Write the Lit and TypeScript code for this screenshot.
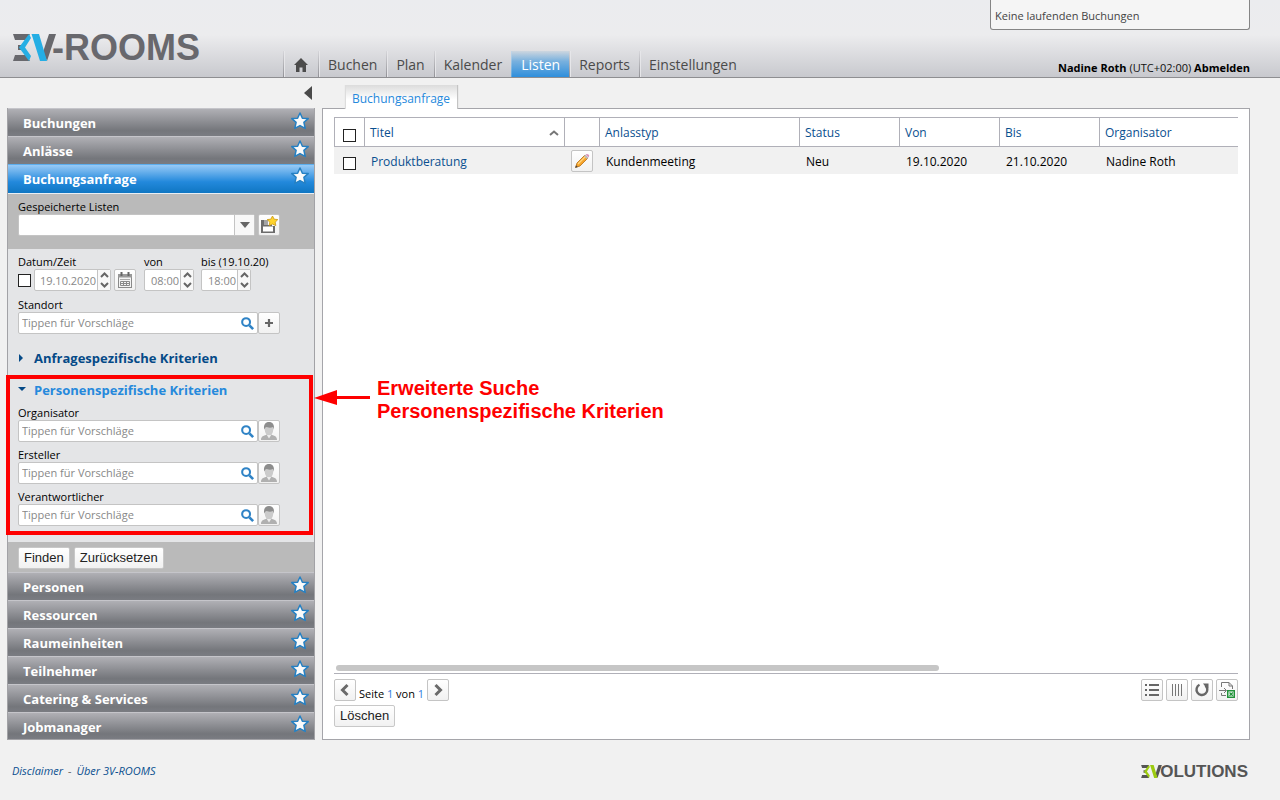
import { LitElement, html, css, svg } from "lit";
import { customElement } from "lit/decorators.js";

const icons: Record<string, unknown> = {
  home: svg`<path d="M8 1 15 8H13V15H9.500V10.500H6.500V15H3V8H1Z" fill="#4b4b4b"/>`,
  left: svg`<path d="M10.500 3 5.500 8 10.500 13" fill="none" stroke="#6a6a6a" stroke-width="3"/>`,
  right: svg`<path d="M5.500 3 10.500 8 5.500 13" fill="none" stroke="#6a6a6a" stroke-width="3"/>`,
  list: svg`<path d="M1 3h2M5 3h10M1 8h2M5 8h10M1 13h2M5 13h10" stroke="#666" stroke-width="2"/>`,
  columns: svg`<path d="M3.500 2v12M6.500 2v12M9.500 2v12M12.500 2v12" stroke="#777"/>`,
  reload: svg`<path d="M5.500 2.800A5.400 5.400 0 1 0 11.500 3.600" fill="none" stroke="#666" stroke-width="2.400"/><path d="M9 1.500H14.500V6.500L12 5.500Z" fill="#666"/>`,
  exportx: svg`<path d="M2.500 5V0.500H10L13.500 4V7M10 0.500V4H13.500M2.500 11V13.500H7M0 8.500H7M5 6l2.500 2.500L5 11" fill="none" stroke="#777"/><rect x="8.750" y="8.750" width="6.500" height="6.500" fill="#fff" stroke="#21923a" stroke-width="1.500"/><path d="M10.500 10.500l3.300 3.300M13.800 10.500l-3.300 3.300" stroke="#21923a" stroke-width="1.300"/>`,
  pencil: svg`<path d="M1.500 14.500 3 10 11 2 14 5 6 13Z" fill="#f7a42a" stroke="#b56d14" stroke-width=".8"/><path d="M4 11 11.500 3.500" stroke="#ffd781" stroke-width="1.300"/><path d="M10 3 11.300 1.800 14.300 4.700 13 6Z" fill="#b9bcc4"/><path d="M11.500 1.500Q13 .3 14.500 1.500T14.500 4.500Z" fill="#d893b8"/><path d="M1.300 14.700 2.100 12.300 3.800 14Z" fill="#444"/>`,
  plus: svg`<path d="M8 4v8M4 8h8" stroke="#666" stroke-width="2.200"/>`,
  person: svg`<path d="M0 17C0 13.500 2 13 5 12L6 11H10L11 12C14 13 16 13.500 16 17Z" fill="#b0b0b0"/><path d="M5.500 11.500 8 15.500 10.500 11.500Z" fill="#ececec"/><path d="M3.700 3.500H12.300V6.500Q12 12 8 12T3.700 6.500Z" fill="#cbcbcb"/><path d="M3.200 6.500C2.300 1.500 4.500-1 8-1S13.700 1.500 12.800 6.500L12 4Q9 5.200 6.500 4.200 4.500 3.500 3.200 6.500Z" fill="#8d8d8d"/>`,
  calendar: svg`<rect x="1.500" y="2.500" width="13" height="13" fill="#f4f4f4" stroke="#8a8a8a"/><path d="M1 2h14v3.500H1Z" fill="#999"/><path d="M4.500 0v4M11.500 0v4" stroke="#666" stroke-width="2"/><path d="M3 7.500h10" stroke="#aaa"/><path d="M3.500 9.500h9v4h-9ZM3.500 11.500h9M6.500 9.500v4M9.500 9.500v4" fill="none" stroke="#8a8a8a"/>`,
  save: svg`<path d="M0 3H4V8H11V9H14V16H0Z" fill="#6c6c6c"/><path d="M3 3h4v5H3Z" fill="#a4a4a4"/><path d="M2 9.500H12V14.500H2Z" fill="#fff"/><path d="M11.500-1 13.200 2.200 16.800 2.600 14.200 5.200 14.800 8.600 11.500 7 8.200 8.600 8.800 5.200 6.200 2.600 9.800 2.200Z" fill="#ffd42d" stroke="#c99710" stroke-width=".8"/>`,
  search: svg`<circle cx="6.500" cy="6.500" r="4.200" fill="#fff" stroke="#2f83c6" stroke-width="2.200"/><path d="M10 10 14 14" stroke="#2f83c6" stroke-width="2.800"/>`,
};

const icon = (name: string) =>
  html`<svg class="icon" viewBox="0 0 16 16" aria-hidden="true">${icons[name]}</svg>`;

const star = html`<svg class="star" viewBox="0 0 18 18" aria-hidden="true">
  <path d="M9 1 11.400 6.300 17.200 6.600 12.900 10.400 14.200 16.400 9 13.600 3.800 16.400 5.100 10.400 .8 6.600 6.600 6.300Z"
    fill="#fbfbfb" stroke="#2580c3" stroke-width="1.500" stroke-linejoin="round"/></svg>`;

const mark = (gray: string, accent: string) => html`<svg class="mark" viewBox="0 0 43 27" aria-hidden="true">
  <path d="M0 0H17L13 6H2ZM5 11H12V16H5ZM2 21H13L17 27H0Z" fill=${gray}/>
  <path d="M36 0H43L34 27L30 18Z" fill=${gray}/>
  <path d="M16 0 18 4 12 13.500 18 22 16 27 6 13.500ZM18.500 0H26L34 27H27Z" fill=${accent}/></svg>`;

const base = css`
  * { box-sizing: border-box; }
  button, input, select { font: inherit; margin: 0; }
  .icon { width: 16px; height: 16px; display: block; overflow: visible; }
  .square {
    width: 22px; height: 22px; padding: 0; flex: none;
    display: grid; place-items: center;
    border: 1px solid #c4c4c4; border-radius: 2px;
    background: linear-gradient(#fff, #f1f1f1);
  }
  .check {
    appearance: none; width: 13px; height: 13px; flex: none; display: block;
    border: 1px solid #222; background: #fff;
  }
  .action {
    height: 22px; padding: 0 5px;
    border: 1px solid #c8c8c8; border-radius: 2px;
    background: linear-gradient(#fff, #f1f1f1);
    font: 13px/20px "Liberation Sans", Arial, sans-serif; color: #222;
  }
`;

@customElement("rooms-header")
class RoomsHeader extends LitElement {
  static styles = [base, css`
    :host { display: block; }
    .header {
      height: 78px; padding: 0 30px 0 13px;
      display: flex; align-items: flex-end; gap: 83px;
      background: linear-gradient(#ebecef 0, #ececee 35px, #c8c9ce 77px);
      border-bottom: 1px solid #8e8e91;
    }
    .logo {
      display: flex; align-items: center; height: 60px;
      font: bold 36px/60px "Liberation Sans", Arial, sans-serif; color: #68686d;
    }
    .logo span { padding-top: 2px; }
    .mark { width: 43px; height: 27px; margin-right: -4px; }
    nav { display: flex; }
    .tab {
      height: 26px; padding: 0 9px; line-height: 27px; font-size: 14px;
      color: #4a4a4a; text-decoration: none; white-space: nowrap;
      border-left: 1px solid; border-image: linear-gradient(#d8d8dc, #8f8f94) 1;
      box-shadow: inset 1px 0 #e6e6e9;
    }
    .tab.home { display: grid; place-items: center; padding: 2px 9px 0; }
    .tab.active {
      color: #fff; box-shadow: none; border-image: linear-gradient(#c8d8e8, #58a5df) 1;
      background: linear-gradient(#cdd6df, #77b0de 40%, #2f8fdc);
    }
    .right {
      align-self: stretch; margin-left: auto; width: 260px;
      display: flex; flex-direction: column; justify-content: space-between;
      font-size: 11px; white-space: nowrap;
    }
    .notice {
      height: 30px; padding: 0 4px; line-height: 31px; color: #444;
      background: #f5f5f5; border: 1px solid #858585; border-top: 0; border-radius: 0 0 3px 3px;
    }
    .user { text-align: right; line-height: 18px; color: #111; }
    .user a { font-weight: bold; color: #000; text-decoration: none; }
  `];
  render() {
    const tabs = ["Buchen", "Plan", "Kalender", "Listen", "Reports", "Einstellungen"];
    return html`<header class="header">
      <div class="logo">${mark("#68686d", "#25aee4")}<span>-ROOMS</span></div>
      <nav>
        <a class="tab home" href="#" aria-label="Start">${icon("home")}</a>
        ${tabs.map((t) => html`<a class="tab ${t === "Listen" ? "active" : ""}" href="#">${t}</a>`)}
      </nav>
      <div class="right">
        <div class="notice">Keine laufenden Buchungen</div>
        <div class="user"><a href="#">Nadine Roth</a> (UTC+02:00) <a href="#">Abmelden</a></div>
      </div>
    </header>`;
  }
}

@customElement("rooms-sidebar")
class RoomsSidebar extends LitElement {
  static styles = [base, css`
    :host { display: block; width: 308px; flex: none; }
    .top { height: 30px; display: flex; justify-content: flex-end; align-items: center; padding-right: 2px; }
    .collapse { border: 0; background: none; padding: 0; width: 9px; height: 14px; display: block; }
    .collapse svg { display: block; }
    .box { border: 1px solid #a2a2a6; border-top: 0; font-size: 11px; line-height: 15px; }
    .head {
      display: flex; align-items: center; justify-content: space-between;
      width: 100%; height: 28px; padding: 0 5px 0 15px;
      border: 0; border-top: 1px solid #c5c5ca;
      background: linear-gradient(#b0b0b5, #74767b 80%, #7a7c82);
      color: #fff; font-size: 13px; font-weight: bold; line-height: 20px; text-align: left;
    }
    .head span { padding-top: 1px; }
    .head:last-child { height: 27px; }
    .head.active {
      height: 30px; padding-bottom: 2px; border-top-color: #5daeed; border-bottom: 1px solid #e8eef4;
      background: linear-gradient(#98caf6, #2389dc 60%, #0f76c2);
    }
    .star { width: 18px; height: 18px; margin-bottom: 4px; }
    .saved, .buttons { background: #bababa; padding: 5px 10px 13px; }
    .buttons { padding: 5px 10px 3px; display: flex; gap: 4px; }
    .form { background: #e4e5e7; padding: 5px 10px 16px; display: flex; flex-direction: column; gap: 5px; }
    label { display: block; color: #000; white-space: nowrap; }
    .line { display: flex; align-items: center; height: 22px; }
    .line.spaced { gap: 3px; }
    .pick { position: relative; width: 237px; height: 22px; }
    .pick select {
      appearance: none; width: 100%; height: 22px; background: #fff;
      border: 1px solid #c4c4c4; border-radius: 2px;
    }
    .pick .arrow {
      position: absolute; top: 1px; right: 1px; width: 20px; height: 20px; pointer-events: none;
      border-left: 1px solid #c4c4c4; background: #f8f8f8; display: grid; place-items: center;
    }
    .search { position: relative; width: 240px; }
    .search .icon { position: absolute; right: 3px; top: 4px; width: 15px; height: 15px; }
    .text {
      width: 100%; height: 22px; padding: 0 3px 2px; display: block;
      border: 1px solid #c4c4c4; border-radius: 2px; background: #fff; color: #888;
    }
    .text::placeholder { color: #888; opacity: 1; }
    .times { display: flex; gap: 7px; margin-bottom: 1px; }
    .times .date { width: 119px; }
    .times .line { gap: 3px; }
    .spin { display: flex; width: 50px; height: 22px; border: 1px solid #c4c4c4; border-radius: 2px; background: #fff; }
    .spin.wide { width: 77px; }
    .spin input { flex: 1; min-width: 0; border: 0; padding: 0 1px 0 0; background: none; color: #888; text-align: right; }
    .spin span { width: 13px; border-left: 1px solid #c4c4c4; display: grid; place-items: center; background: #f8f8f8; }
    .group { position: relative; display: flex; flex-direction: column; gap: 5px; margin-top: 7px; }
    .group.first { margin-top: 9px; }
    .toggle {
      display: flex; align-items: center; gap: 8px; padding: 0; border: 0; background: none;
      height: 20px; font-size: 13px; font-weight: bold; line-height: 20px; color: #054a87; white-space: nowrap;
    }
    .toggle.open { color: #2689dc; }
    .frame {
      position: absolute; left: -12px; top: -5px; right: -9px; bottom: -9px;
      border: 4px solid #fe0000; pointer-events: none;
    }
    .pointer { position: absolute; left: 296px; top: 10px; pointer-events: none; }
    .note {
      position: absolute; left: 359px; top: -3px; margin: 0; white-space: nowrap; pointer-events: none;
      color: #fe0000; font: bold 20px/23px "Liberation Sans", Arial, sans-serif;
    }
  `];
  head(name: string, active = false) {
    return html`<button class="head ${active ? "active" : ""}"><span>${name}</span>${star}</button>`;
  }
  field(name: string, button: string) {
    return html`<div><label for=${name}>${name}</label>
      <div class="line"><div class="search">
        <input class="text" id=${name} placeholder="Tippen für Vorschläge">${icon("search")}</div>
        <button class="square" aria-label="${name} auswählen">${icon(button)}</button></div></div>`;
  }
  spinner(id: string, value: string, wide = false) {
    return html`<div class="spin ${wide ? "wide" : ""}"><input id=${id} value=${value}>
      <span><svg width="9" height="16" viewBox="0 0 9 16"><path d="M1 5 4.500 1.500 8 5M1 11 4.500 14.500 8 11" fill="none" stroke="#666" stroke-width="2"/></svg></span></div>`;
  }
  render() {
    return html`
      <div class="top"><button class="collapse" aria-label="Einklappen">
        <svg width="8" height="14"><path d="M8 0V14L0 7Z" fill="#4a4a4a"/></svg></button></div>
      <div class="box">
        ${this.head("Buchungen")}${this.head("Anlässe")}${this.head("Buchungsanfrage", true)}
        <div class="saved"><label for="saved">Gespeicherte Listen</label>
          <div class="line spaced"><div class="pick"><select id="saved"><option></option></select>
            <span class="arrow"><svg width="10" height="6"><path d="M0 0H10L5 6Z" fill="#666"/></svg></span></div>
            <button class="square" aria-label="Liste speichern">${icon("save")}</button></div></div>
        <div class="form">
          <div class="times">
            <div class="date"><label for="date">Datum/Zeit</label><div class="line">
              <input class="check" type="checkbox" aria-label="Datum/Zeit verwenden">
              ${this.spinner("date", "19.10.2020", true)}
              <button class="square" aria-label="Kalender">${icon("calendar")}</button></div></div>
            <div><label for="from">von</label>${this.spinner("from", "08:00")}</div>
            <div><label for="to">bis (19.10.20)</label>${this.spinner("to", "18:00")}</div>
          </div>
          ${this.field("Standort", "plus")}
          <div class="group first"><button class="toggle" aria-expanded="false">
            <svg width="8" height="8"><path d="M1 0 5 4 1 8Z" fill="#054a87"/></svg>Anfragespezifische Kriterien</button></div>
          <div class="group"><button class="toggle open" aria-expanded="true">
            <svg width="8" height="8"><path d="M0 1H8L4 5Z" fill="#054a87"/></svg>Personenspezifische Kriterien</button>
            ${["Organisator", "Ersteller", "Verantwortlicher"].map((n) => this.field(n, "person"))}
            <div class="frame"></div>
            <svg class="pointer" width="56" height="16"><path d="M0 8 23 0V6H56V9H23V15Z" fill="#fe0000"/></svg>
            <p class="note">Erweiterte Suche<br>Personenspezifische Kriterien</p>
          </div>
        </div>
        <div class="buttons"><button class="action">Finden</button><button class="action">Zurücksetzen</button></div>
        ${["Personen", "Ressourcen", "Raumeinheiten", "Teilnehmer", "Catering & Services", "Jobmanager"].map((n) => this.head(n))}
      </div>`;
  }
}

@customElement("rooms-list")
class RoomsList extends LitElement {
  static styles = [base, css`
    :host { display: flex; flex-direction: column; flex: 1; min-width: 0; }
    .tabs { height: 31px; margin-bottom: -1px; padding-left: 24px; display: flex; align-items: flex-end; }
    .tab {
      height: 24px; padding: 0 7px 0 6px; line-height: 28px; font-size: 12px;
      color: #2689dc; text-decoration: none; z-index: 1;
      background: linear-gradient(#dcdcdc, #fff 60%);
      box-shadow: 1px 0 1px #c4c4c4, -1px 0 1px #ddd;
      clip-path: inset(0 -3px 0 -3px);
    }
    .panel {
      flex: 1; display: flex; flex-direction: column; padding: 8px 11px 12px;
      background: #fff; border: 1px solid #a5a5aa;
    }
    .grid { flex: 1; overflow: hidden; }
    table { table-layout: fixed; width: 965px; border-collapse: separate; border-spacing: 0; font-size: 12px; line-height: 20px; }
    th, td { padding: 2px 5px 0; text-align: left; font-weight: normal; white-space: nowrap; }
    th { height: 30px; border: solid #b0b0b8; border-width: 1px 0 1px 1px; color: #0a4f8f; }
    td { height: 27px; background: #f1f1f1; padding-left: 7px; color: #000; }
    td a { color: #0a4f8f; text-decoration: none; }
    .check { margin: 4px 0 0 3px; }
    td .check { margin: 3px 0 0 2px; }
    .sort { display: flex; justify-content: space-between; align-items: center; }
    .edit { padding-top: 0; }
    .scroll { height: 8px; padding: 0 2px; }
    .thumb { width: 67%; height: 6px; border-radius: 3px; background: #c6c6c6; }
    .bar { border-top: 1px solid #b0b0b8; padding: 4px 0 2px; display: flex; align-items: center; gap: 3px; }
    .page { font-size: 11px; line-height: 14px; padding-top: 9px; }
    .page a { color: #2f7de0; text-decoration: none; }
    .end { margin-left: auto; }
  `];
  render() {
    const widths = [30, 200, 35, 200, 100, 100, 100, 200];
    return html`<div class="tabs"><a class="tab" href="#">Buchungsanfrage</a></div>
      <main class="panel">
        <div class="grid"><table>
          <colgroup>${widths.map((w) => html`<col style="width:${w}px">`)}</colgroup>
          <thead><tr>
            <th><input class="check" type="checkbox" aria-label="Alle auswählen"></th>
            <th><span class="sort">Titel<svg width="10" height="6"><path d="M1 5 5 1.500 9 5" fill="none" stroke="#777" stroke-width="2"/></svg></span></th>
            <th></th><th>Anlasstyp</th><th>Status</th><th>Von</th><th>Bis</th><th>Organisator</th>
          </tr></thead>
          <tbody><tr>
            <td><input class="check" type="checkbox" aria-label="Produktberatung auswählen"></td>
            <td><a href="#">Produktberatung</a></td>
            <td class="edit"><button class="square" aria-label="Bearbeiten">${icon("pencil")}</button></td>
            <td>Kundenmeeting</td><td>Neu</td><td>19.10.2020</td><td>21.10.2020</td><td>Nadine Roth</td>
          </tr></tbody>
        </table></div>
        <div class="scroll"><div class="thumb"></div></div>
        <div class="bar">
          <button class="square" aria-label="Zurück">${icon("left")}</button>
          <span class="page">Seite <a href="#">1</a> von <a href="#">1</a></span>
          <button class="square" aria-label="Weiter">${icon("right")}</button>
          <span class="end"></span>
          ${["list", "columns", "reload", "exportx"].map((n) => html`<button class="square" aria-label=${n}>${icon(n)}</button>`)}
        </div>
        <div><button class="action">Löschen</button></div>
      </main>`;
  }
}

@customElement("app-root")
class AppRoot extends LitElement {
  static styles = [base, css`
    :host {
      display: flex; flex-direction: column; min-height: 100vh;
      background: #f1f1f1; font-family: "Open Sans", "Noto Sans", sans-serif;
    }
    .work { flex: 1; display: flex; gap: 7px; padding: 0 30px 0 7px; }
    footer {
      height: 60px; padding: 0 32px 0 12px; display: flex; align-items: center; justify-content: space-between;
      font-size: 11px; font-style: italic; color: #777;
    }
    footer a { color: #0a4f8f; text-decoration: none; }
    .links { display: flex; gap: 5px; }
    .brand { display: flex; align-items: center; padding-top: 3px; font: bold 17px/20px "Liberation Sans", Arial, sans-serif; color: #555; }
    .mark { width: 21px; height: 13px; margin-right: -2px; }
  `];
  render() {
    return html`<rooms-header></rooms-header>
      <div class="work"><rooms-sidebar></rooms-sidebar><rooms-list></rooms-list></div>
      <footer><div class="links"><a href="#">Disclaimer</a><span>-</span><a href="#">Über 3V-ROOMS</a></div>
        <div class="brand">${mark("#555", "#9ccb10")}<span>OLUTIONS</span></div></footer>`;
  }
}
